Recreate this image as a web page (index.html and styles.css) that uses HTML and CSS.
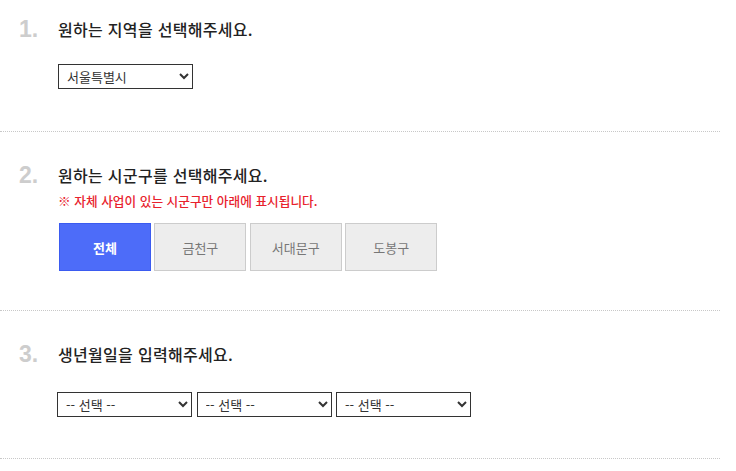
FILE: index.html
```html
<!DOCTYPE html>
<html lang="ko">
<head>
    <meta charset="UTF-8">
    <title>지역 선택</title>
    <link rel="stylesheet" href="styles.css">
</head>
<body>
    <div class="container">
        <!-- Step 1 -->
        <section class="step step-first">
            <div class="step-num">1.</div>
            <div class="step-body">
                <h2 class="step-title">원하는 지역을 선택해주세요.</h2>
                <div class="field-row">
                    <select class="select select-city">
                        <option>서울특별시</option>
                    </select>
                </div>
            </div>
        </section>

        <!-- Step 2 -->
        <section class="step step-district">
            <div class="step-num">2.</div>
            <div class="step-body">
                <h2 class="step-title">원하는 시군구를 선택해주세요.</h2>
                <p class="step-note">※ 자체 사업이 있는 시군구만 아래에 표시됩니다.</p>
                <div class="district-list">
                    <button class="district-btn active">전체</button>
                    <button class="district-btn">금천구</button>
                    <button class="district-btn">서대문구</button>
                    <button class="district-btn">도봉구</button>
                </div>
            </div>
        </section>

        <!-- Step 3 -->
        <section class="step">
            <div class="step-num">3.</div>
            <div class="step-body">
                <h2 class="step-title">생년월일을 입력해주세요.</h2>
                <div class="field-row birth-row">
                    <select class="select"><option>-- 선택 --</option></select>
                    <select class="select"><option>-- 선택 --</option></select>
                    <select class="select"><option>-- 선택 --</option></select>
                </div>
            </div>
        </section>
    </div>
</body>
</html>
```

FILE: styles.css
```css
* {
    margin: 0;
    padding: 0;
    box-sizing: border-box;
    font-family: "Noto Sans CJK KR", "Noto Sans", sans-serif;
}

body {
    background-color: #ffffff;
    color: #222;
}

.container {
    width: 720px;
}

/* Steps */
.step {
    display: flex;
    padding: 32px 0 41px 19px;
    border-bottom: 1px dotted #c8c8c8;
}

.step-first {
    padding-top: 18px;
    padding-bottom: 42px;
}

.step-district {
    padding-bottom: 39px;
}

.step-num {
    width: 39px;
    font-family: "Liberation Sans", Arial, sans-serif;
    font-size: 23px;
    font-weight: bold;
    line-height: 22px;
    color: #cdcdcd;
}

.step-body {
    flex: 1;
}

.step-title {
    font-size: 16px;
    font-weight: 500;
    line-height: 22px;
    letter-spacing: 0.3px;
    color: #222;
}

.step-note {
    margin-top: 6px;
    font-size: 12.7px;
    font-weight: 500;
    line-height: 18px;
    color: #e8222d;
}

/* Selects */
.field-row {
    display: flex;
    gap: 4px;
    margin-top: 24px;
}

.birth-row {
    gap: 4.5px;
    margin-top: 27px;
    margin-left: -1px;
}

.select {
    width: 135px;
    height: 25px;
    padding: 0 4px;
    border: 1px solid #333;
    border-radius: 0;
    background-color: #fff;
    font-size: 13px;
    color: #333;
}

/* District buttons */
.district-list {
    display: flex;
    gap: 3.4px;
    margin-top: 13px;
    margin-left: 1px;
}

.district-btn {
    width: 92px;
    height: 48px;
    border: 1px solid #cccccc;
    background-color: #ededed;
    color: #777;
    font-size: 13px;
    cursor: pointer;
}

.district-btn.active {
    background-color: #4d6cf9;
    border-color: #3b5bf0;
    color: #fff;
    font-weight: bold;
}
```
